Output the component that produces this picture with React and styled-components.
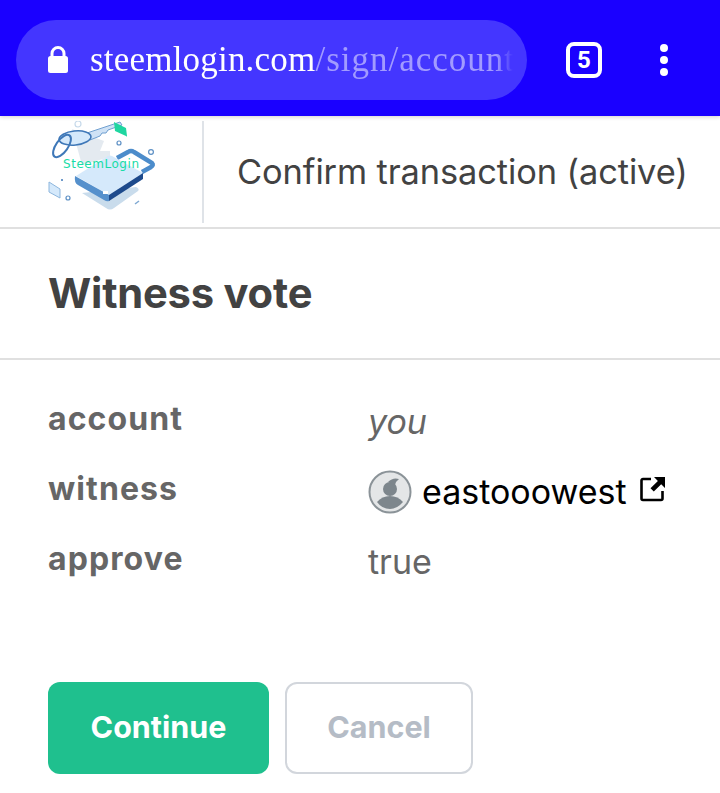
import React from 'react';
import styled, { createGlobalStyle } from 'styled-components';

const GlobalStyle = createGlobalStyle`
	html, body {
		margin: 0;
		padding: 0;
		background: white;
		overflow: hidden;
	}
	body {
		font-family: Inter, 'Noto Sans', sans-serif;
	}
`;

const Page = styled.div`
	width: 720px;
	height: 793px;
	display: flex;
	flex-direction: column;
`;

// Browser chrome
const Toolbar = styled.div`
	height: 116px;
	flex: none;
	background: #1a00ff;
	display: flex;
	align-items: center;
	padding: 4px 0 0 16px;
	box-sizing: border-box;
	position: relative;
	z-index: 2;
	box-shadow: 0 1px 4px rgba(0, 0, 0, 0.18);
`;

const AddressBar = styled.div`
	width: 511px;
	height: 80px;
	border-radius: 40px;
	background: #4436ff;
	display: flex;
	align-items: center;
	padding-left: 30px;
	box-sizing: border-box;
`;

const Address = styled.div`
	margin-left: 20px;
	width: 423px;
	overflow: hidden;
	white-space: nowrap;
	font-family: 'Liberation Serif', serif;
	font-size: 35px;
	letter-spacing: 0.2px;
	color: white;
	mask-image: linear-gradient(to right, black 96%, transparent 100%);

	span {
		color: #a29bff;
		letter-spacing: 1px;
	}
`;

const TabCount = styled.div`
	width: 36px;
	height: 36px;
	margin-left: 39px;
	box-sizing: border-box;
	border: 4px solid white;
	border-radius: 8px;
	color: white;
	font-family: Roboto, sans-serif;
	font-weight: 700;
	font-size: 24px;
	line-height: 1;
	display: flex;
	align-items: center;
	justify-content: center;
`;

const MenuDots = styled.div`
	margin-left: 58px;
	display: flex;
	flex-direction: column;
	gap: 4px;

	i {
		width: 8px;
		height: 8px;
		border-radius: 50%;
		background: white;
	}
`;

// Header
const Header = styled.div`
	height: 113px;
	flex: none;
	box-sizing: border-box;
	border-bottom: 2px solid #e0e0e0;
	display: flex;
	align-items: center;
	padding: 4px 0 3px 48px;
`;

const LogoBox = styled.div`
	width: 154px;
	height: 102px;
	flex: none;
	border-right: 2px solid #dfe3e8;
	margin-right: 33px;
`;

const Title = styled.div`
	font-size: 34.4px;
	color: #424242;
	white-space: nowrap;
	letter-spacing: -0.1px;
	margin-top: -2px;
`;

const OperationTitle = styled.h1`
	margin: 0;
	height: 131px;
	flex: none;
	box-sizing: border-box;
	border-bottom: 2px solid #e0e0e0;
	padding: 0 0 1px 48px;
	display: flex;
	align-items: center;
	font-size: 41.7px;
	font-weight: 700;
	color: #424242;
	letter-spacing: -0.2px;
`;

const Fields = styled.div`
	padding: 26px 0 0 48px;
	display: grid;
	grid-template-columns: 320px 1fr;
	grid-auto-rows: 70px;
	align-items: center;
`;

const Label = styled.div`
	font-size: 32px;
	font-weight: 700;
	color: #666666;
	letter-spacing: 1.1px;
	margin-top: -6px;
`;

const Value = styled.div`
	display: flex;
	align-items: center;
	font-size: 34px;
	color: ${(p) => (p.$dark ? 'black' : '#666666')};
	font-style: ${(p) => (p.$italic ? 'italic' : 'normal')};
`;

const Avatar = styled.div`
	width: 44px;
	height: 44px;
	flex: none;
	margin: 2px 10px 0 0;
`;

const LinkGlyph = styled.svg`
	margin-left: 13px;
	margin-top: -4px;
	flex: none;
`;

const Actions = styled.div`
	margin-top: 86px;
	padding-left: 48px;
	display: flex;
	gap: 16px;
`;

const Button = styled.button`
	height: 92px;
	width: ${(p) => p.$width}px;
	box-sizing: border-box;
	border-radius: 12px;
	border: ${(p) => (p.$primary ? 'none' : '2px solid #d2d6dc')};
	background: ${(p) => (p.$primary ? '#1fc08e' : 'white')};
	color: ${(p) => (p.$primary ? 'white' : '#b5bcc6')};
	font-family: inherit;
	font-size: 30.5px;
	font-weight: 700;
	padding: 0 0 4px;
`;

const LockIcon = () => (
	<svg width="24" height="28" viewBox="0 0 24 28">
		<path d="M6 11V7.5a6 6 0 0 1 12 0V11" fill="none" stroke="white" strokeWidth="3" />
		<rect x="2" y="10" width="20" height="17" rx="2.5" fill="white" />
	</svg>
);

const LinkIcon = () => (
	<LinkGlyph width="26" height="26" viewBox="0 0 26 26">
		<path d="M11 3H3a1.5 1.5 0 0 0-1.5 1.5v18A1.5 1.5 0 0 0 3 24h18a1.5 1.5 0 0 0 1.5-1.5V15" fill="none" stroke="black" strokeWidth="2.6" />
		<path d="M14 1h11v11l-3.8-3.8-7.4 7.4-3.3-3.3 7.4-7.4Z" fill="black" />
	</LinkGlyph>
);

const SteemLogo = () => (
	<svg width="112" height="102" viewBox="0 0 112 102">
		<path d="M34 72 L88 66 Q92 68 90 70 L66 87 Q62 90 58 87 Z" fill="#c9dcec" />
		<path d="M24 8 L56 20 L52 30 L62 30 L62 36 L34 44 Z" fill="#d9e1e9" opacity="0.7" />
		<path d="M69 37 L80 31 Q83 29 86 31 L104 42 Q106 44 103 46 L94 51" fill="none" stroke="#4c8ccb" strokeWidth="4.5" />
		<path d="M28 55 L60 35 Q62 34 64 35 L95 52 L61 74 Z" fill="#d5e9fb" />
		<path d="M27 55 L61 74 L61 80 Q59 81 56 79 L30 64 Q26 62 27 55 Z" fill="#5590cc" />
		<path d="M61 74 L95 52 L95 58 L61 80 Z" fill="#1d4a8c" />
		<rect x="55" y="70" width="5" height="3" fill="white" />
		<path d="M39 12 L72 1 L74 4 L60 9 L58 12 L54 12 L52 15 L42 19 Z" fill="#cfe2f5" stroke="#6f9fd0" strokeWidth="1" />
		<ellipse cx="27" cy="17" rx="16" ry="7" transform="rotate(-6 27 17)" fill="#d5e9fb" stroke="#3f78b8" strokeWidth="1.6" />
		<ellipse cx="14" cy="25" rx="6" ry="13" transform="rotate(35 14 25)" fill="none" stroke="#3f78b8" strokeWidth="2" />
		<path d="M66 1 L78 7 L79 15 Q79 16 78 15 L67 10 Z" fill="#1fd6a0" />
		<path d="M1 61 L12 68 L12 77 L1 71 Z" fill="#d5e9fb" stroke="#8db6dd" strokeWidth="1" />
		<circle cx="30" cy="3" r="3" fill="none" stroke="#c6d9ea" strokeWidth="1.2" />
		<circle cx="71" cy="22" r="2" fill="none" stroke="#5c8fc4" strokeWidth="1.2" />
		<circle cx="103" cy="31" r="2.4" fill="none" stroke="#5c8fc4" strokeWidth="1.2" />
		<circle cx="20" cy="77" r="2" fill="none" stroke="#5c8fc4" strokeWidth="1.2" />
		<circle cx="14" cy="59" r="1" fill="#3f78b8" />
		<path d="M87 83 L91 80" stroke="#7ea8d2" strokeWidth="1.5" />
		<text x="15" y="47" fontFamily="'DejaVu Sans', sans-serif" fontSize="12" fill="#17dca6" textLength="76">SteemLogin</text>
	</svg>
);

const WitnessAvatar = () => (
	<svg width="44" height="44" viewBox="0 0 44 44">
		<circle cx="22" cy="22" r="20.5" fill="#e4e6e7" stroke="#8b9398" strokeWidth="2" />
		<circle cx="22" cy="19" r="7" fill="#7d868c" />
		<path d="M20 12 Q25 7 31 9 Q28 11 27 15 Z" fill="#7d868c" />
		<path d="M9 32 Q14 26 22 26 Q30 26 35 32 Q29 39 22 39 Q14 39 9 32 Z" fill="#7d868c" />
	</svg>
);

const App = () => {
	return (
		<Page>
			<GlobalStyle />
			<Toolbar>
				<AddressBar>
					<LockIcon />
					<Address>
						steemlogin.com<span>/sign/account</span>
					</Address>
				</AddressBar>
				<TabCount>5</TabCount>
				<MenuDots>
					<i />
					<i />
					<i />
				</MenuDots>
			</Toolbar>
			<Header>
				<LogoBox>
					<SteemLogo />
				</LogoBox>
				<Title>Confirm transaction (active)</Title>
			</Header>
			<OperationTitle>Witness vote</OperationTitle>
			<Fields>
				<Label>account</Label>
				<Value $italic>you</Value>
				<Label>witness</Label>
				<Value $dark>
					<Avatar>
						<WitnessAvatar />
					</Avatar>
					eastooowest
					<LinkIcon />
				</Value>
				<Label>approve</Label>
				<Value>true</Value>
			</Fields>
			<Actions>
				<Button $primary $width={221}>Continue</Button>
				<Button $width={188}>Cancel</Button>
			</Actions>
		</Page>
	);
};

export default App;
